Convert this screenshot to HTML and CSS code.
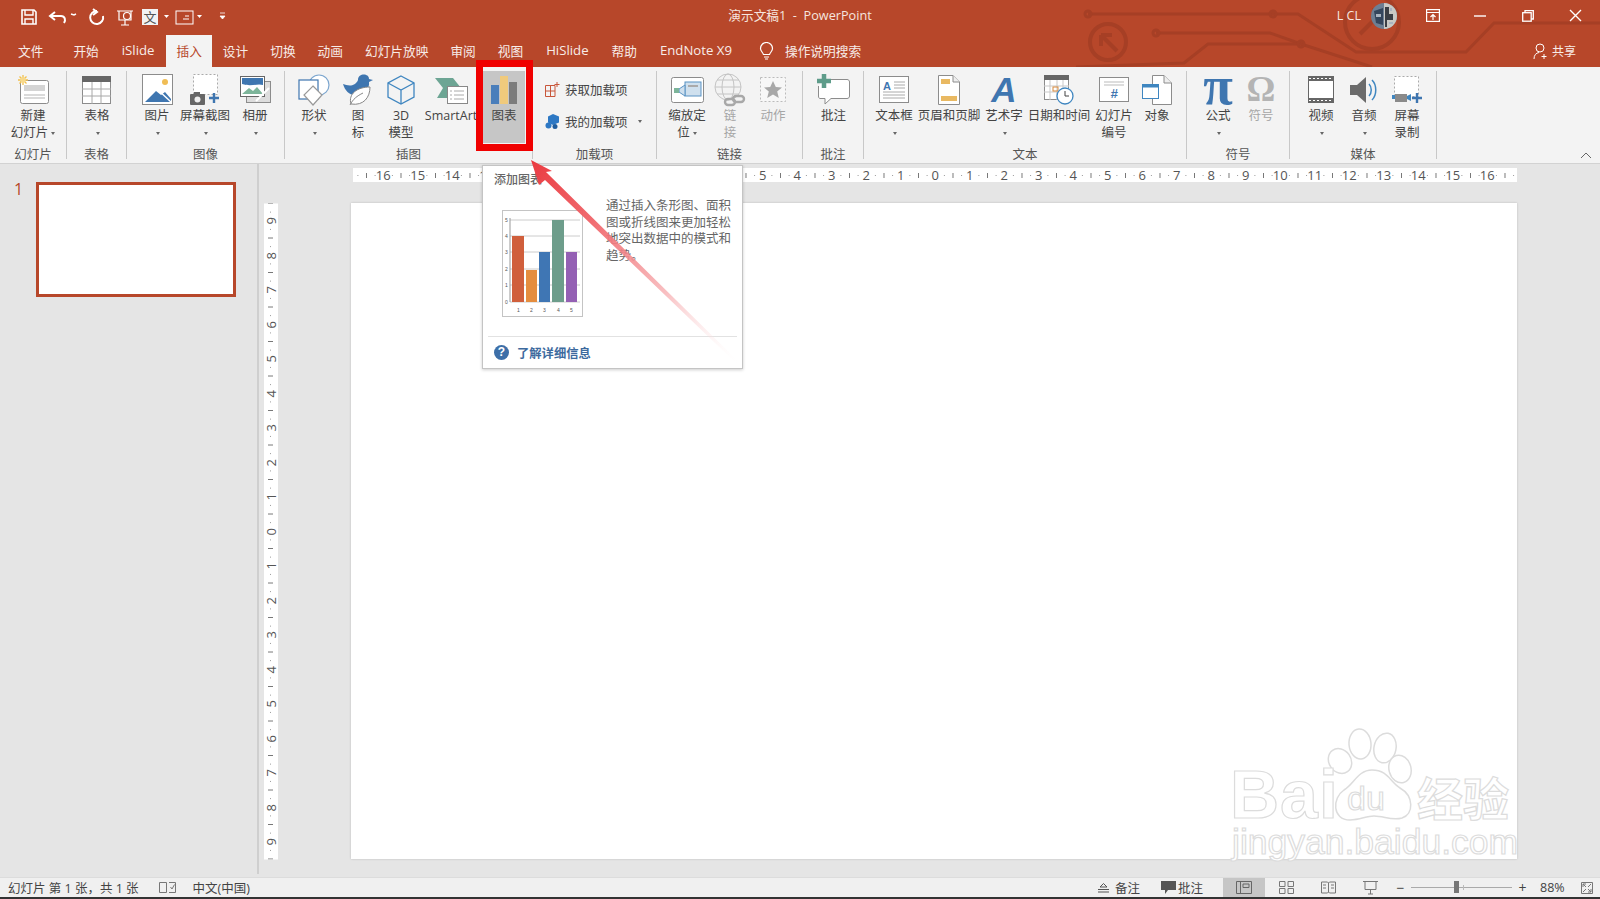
FILE: index.html
```html
<!DOCTYPE html>
<html>
<head>
  <title>演示文稿1 - PowerPoint</title>
  <meta name="viewport" content="width=device-width, initial-scale=1">
  <link rel="stylesheet" href="styles.css">
</head>
<body>
<div class="app">

  <header class="top">
    <svg class="circuit" width="600" height="67" viewBox="1000 0 600 67" fill="none" stroke="#a63f25" stroke-width="3">
      <path d="M1088 14H1298L1356 52H1466L1494 23H1600"/>
      <path d="M1156 33H1270L1301 44L1372 67"/>
      <path d="M1076 67L1184 63L1208 44H1300"/>
      <circle cx="1088" cy="14" r="3"/><circle cx="1273" cy="14" r="3"/><circle cx="1156" cy="33" r="3"/><circle cx="1301" cy="44" r="3"/>
      <circle cx="1108" cy="42" r="18" stroke-width="4"/>
      <path d="M1101 35H1112M1101 35V46M1101 35L1117 51" stroke-width="4"/>
      <circle cx="1372" cy="22" r="27" stroke-width="4"/>
      <path d="M1360 34L1384 10M1372 10H1385V23" stroke-width="4"/>
    </svg>

    <div class="titlebar">
      <svg class="qat" width="220" height="20" viewBox="0 0 220 20" fill="none" stroke="#fff" stroke-width="1.6">
        <path d="M2 3H14L16 5V17H2Z"/><path d="M5 3V8H13V3M5 17V12H13V17" stroke-width="1.4"/>
        <path d="M35 5L30 9L35 13M30 9H41C45 9 46 13 44 16" stroke-width="2"/>
        <path d="M51 7L54 8L56 7" stroke-width="1.4"/>
        <path d="M77 4A6.5 6.5 0 1 0 83 9M73 2L77 5L73 8" stroke-width="2"/>
        <path d="M97 4H113M99 4V13H111V4M105 13V18M101 18H109" stroke-width="1.2"/><circle cx="107" cy="9" r="3.5" stroke-width="1.2"/>
        <rect x="122" y="2" width="16" height="16" fill="#f2f2f2" stroke="none"/>
        <text x="123.500" y="15" class="qat-wen">文</text>
        <path d="M144 8H149L146.500 11Z" fill="#fff" stroke="none"/>
        <rect x="156" y="4" width="17" height="13" stroke-width="1"/><path d="M163 12H169M165 9H169" stroke-width="1"/>
        <path d="M177 8H182L179.500 11Z" fill="#fff" stroke="none"/>
        <path d="M200 6H205M200 9H205L202.500 12Z" fill="#fff" stroke-width=".8"/>
      </svg>
      <div class="doc-title">演示文稿1 &nbsp;-&nbsp; PowerPoint</div>
      <div class="win-controls">
        <span class="user-name">L CL</span>
        <svg class="avatar" width="26" height="26" viewBox="0 0 26 26">
          <circle cx="13" cy="13" r="13" fill="#6d7f93"/>
          <path d="M13 0A13 13 0 0 1 13 26Z" fill="#c9c9c4"/>
          <path d="M3 8L12 5V22L5 20Z" fill="#34465c"/>
          <path d="M14 4H18V11H22V17H16V24H14Z" fill="#3a3f45"/>
          <path d="M5 11H10V14H5ZM19 5H21V8H19ZM18 19H22V21H18Z" fill="#a9b4c0"/>
        </svg>
        <svg class="win-icon ribbon-mode" width="14" height="13" viewBox="0 0 14 13" fill="none" stroke="#fff" stroke-width="1.2"><rect x=".6" y=".6" width="12.800" height="11.800"/><path d="M.6 3.500H13.400M7 11V6M4.500 8L7 5.500L9.500 8"/></svg>
        <svg class="win-icon minimize" width="12" height="12" viewBox="0 0 12 12" stroke="#fff" stroke-width="1.4"><path d="M0 6H12"/></svg>
        <svg class="win-icon restore" width="12" height="12" viewBox="0 0 12 12" fill="none" stroke="#fff" stroke-width="1.3"><rect x=".7" y="2.700" width="8.500" height="8.500"/><path d="M3 2.700V.7H11.300V9H9.200"/></svg>
        <svg class="win-icon close" width="13" height="13" viewBox="0 0 13 13" stroke="#fff" stroke-width="1.4"><path d="M1 1L12 12M12 1L1 12"/></svg>
      </div>
    </div>

    <nav class="tabs">
      <a class="tab tab-file">文件</a>
      <a class="tab">开始</a>
      <a class="tab tab-latin">iSlide</a>
      <a class="tab active">插入</a>
      <a class="tab">设计</a>
      <a class="tab">切换</a>
      <a class="tab">动画</a>
      <a class="tab">幻灯片放映</a>
      <a class="tab">审阅</a>
      <a class="tab">视图</a>
      <a class="tab tab-latin">HiSlide</a>
      <a class="tab">帮助</a>
      <a class="tab tab-latin">EndNote X9</a>
      <span class="tell-me">
        <svg width="15" height="18" viewBox="0 0 15 18" fill="none" stroke="#fff" stroke-width="1.2"><path d="M4.500 12.500C3.500 10 1.500 9 1.500 6.500A6 6 0 0 1 13.500 6.500C13.500 9 11.500 10 10.500 12.500ZM5 15H10M6 17H9"/></svg>
        操作说明搜索
      </span>
      <span class="share">
        <svg width="16" height="17" viewBox="0 0 16 17" fill="none" stroke="#fff" stroke-width="1"><circle cx="7" cy="5" r="4"/><path d="M1 16C1 12 3 10 6 9.500M11 11V16M8.500 13.500H13.500"/></svg>
        共享
      </span>
    </nav>
  </header>

  <section class="ribbon">
    <div class="group g-slide">
      <div class="group-items">
        <div class="btn w-66">
          <div class="ico-box"><svg width="32" height="32" viewBox="0 0 32 32"><rect x="3.500" y="6.500" width="28" height="23" rx="2" fill="#fff" stroke="#8c8c8c"/><rect x="7" y="11" width="21" height="6" fill="#d4d4d4"/><path d="M7 21H28M7 24H28" stroke="#b5b5b5"/><g stroke="#f2c04d" stroke-width="1.300"><path d="M6 1V11M1 6H11M2.500 2.500L9.500 9.500M9.500 2.500L2.500 9.500"/></g><circle cx="6" cy="6" r="2.800" fill="#f7d98a"/></svg></div>
          <span>新建<br>幻灯片<i class="caret"></i></span>
        </div>
      </div>
      <div class="group-label">幻灯片</div>
    </div>

    <div class="group g-table">
      <div class="group-items">
        <div class="btn w-60">
          <div class="ico-box"><svg width="30" height="28" viewBox="0 0 30 28"><rect x=".5" y=".5" width="28" height="27" fill="#fff" stroke="#8c8c8c"/><rect width="29" height="6" fill="#666"/><path d="M0 13H29M0 20H29M10 6V28M19 6V28" stroke="#a8a8a8"/></svg></div>
          <span>表格<br><i class="caret"></i></span>
        </div>
      </div>
      <div class="group-label">表格</div>
    </div>

    <div class="group g-image">
      <div class="group-items">
        <div class="btn w-40">
          <div class="ico-box"><svg width="31" height="31" viewBox="0 0 31 31"><rect x=".5" y=".5" width="30" height="30" fill="#fff" stroke="#8c8c8c"/><circle cx="23" cy="8" r="3" fill="#f0bd55"/><path d="M3 28L14 17L19 21L23 18L29 25V28Z" fill="#3f76b0"/><path d="M15 15L29 28" stroke="#fff" stroke-width="1.500"/></svg></div>
          <span>图片<br><i class="caret"></i></span>
        </div>
        <div class="btn w-56">
          <div class="ico-box"><svg width="30" height="31" viewBox="0 0 30 31"><rect x="3.500" y=".5" width="24" height="20" fill="#fff" stroke="#aaa" stroke-dasharray="2 2"/><rect x="0" y="20" width="15" height="11" rx="1" fill="#666"/><rect x="4" y="18" width="6" height="3" fill="#666"/><circle cx="7.500" cy="25.500" r="3" fill="#eee"/><path d="M24 19V29M19 24H29" stroke="#3f76b0" stroke-width="2.400"/></svg></div>
          <span>屏幕截图<br><i class="caret"></i></span>
        </div>
        <div class="btn w-44">
          <div class="ico-box"><svg width="31" height="28" viewBox="0 0 31 28"><rect x="6.500" y="5.500" width="24" height="21" fill="#ddd" stroke="#8c8c8c"/><rect x=".5" y=".5" width="24" height="20" fill="#fff" stroke="#666"/><path d="M2 2H23V9C17 7 12 11 2 8Z" fill="#3f76b0"/><path d="M2 18L9 12L13 15L17 11L23 18Z" fill="#7db59a"/><path d="M16 25L29 12" stroke="#fff" stroke-width="2"/></svg></div>
          <span>相册<br><i class="caret"></i></span>
        </div>
      </div>
      <div class="group-label">图像</div>
    </div>

    <div class="group g-illus">
      <div class="group-items">
        <div class="btn w-44">
          <div class="ico-box"><svg width="32" height="32" viewBox="0 0 32 32" fill="#fff" stroke="#7ca6cf" stroke-width="1.200"><circle cx="21" cy="11" r="10"/><rect x="1" y="6" width="19" height="19" stroke="#3f76b0"/><path d="M15 12L24 21L15 31L6 21Z" stroke="#999"/></svg></div>
          <span>形状<br><i class="caret"></i></span>
        </div>
        <div class="btn w-44">
          <div class="ico-box"><svg width="32" height="33" viewBox="0 0 32 33"><path d="M16 7C16 0 27 0 27 6L31 7L27 9C28 16 22 21 15 22C8 23 3 18 1 11C6 13 13 14 16 7Z" fill="#3f76b0"/><path d="M9 31C6 21 15 14 28 14C28 24 22 33 9 31Z" fill="#fff" stroke="#888"/><path d="M8 32C11 26 15 23 21 20" fill="none" stroke="#888"/></svg></div>
          <span>图<br>标</span>
        </div>
        <div class="btn w-42">
          <div class="ico-box"><svg width="28" height="30" viewBox="0 0 28 30" fill="none" stroke="#3f86c0" stroke-width="1.300"><path d="M14 1L27 8V22L14 29L1 22V8Z"/><path d="M1 8L14 15L27 8M14 15V29"/></svg></div>
          <span>3D<br>模型</span>
        </div>
        <div class="btn w-58">
          <div class="ico-box"><svg width="33" height="28" viewBox="0 0 33 28"><path d="M0 2H18L26 12H18L12 22H2L8 12Z" fill="#5e9c8a" opacity=".9"/><rect x="12.500" y="10.500" width="20" height="17" fill="#fff" stroke="#888"/><path d="M19 15H29M19 19H29M19 23H29M15 15H17M15 19H17M15 23H17" stroke="#aaa"/></svg></div>
          <span class="no-wrap">SmartArt</span>
        </div>
        <div class="btn w-42 selected">
          <div class="ico-box"><svg width="26" height="28" viewBox="0 0 26 28"><rect x="0" y="9" width="8" height="19" fill="#4a7ebb"/><rect x="9" y="0" width="8" height="28" fill="#f0ca7c"/><rect x="18" y="6" width="8" height="22" fill="#7c7c7c"/></svg></div>
          <span>图表</span>
        </div>
      </div>
      <div class="group-label">插图</div>
    </div>

    <div class="group g-addin">
      <div class="group-items addin-items">
        <div class="addin-row">
          <svg width="15" height="15" viewBox="0 0 15 15" fill="none" stroke="#c8563a"><path d="M.5 3.500H10V14.500H.5ZM.5 9H10M5.500 3.500V14.500"/><path d="M12 0V5M9.500 2.500H14.500"/></svg>
          <span>获取加载项</span>
        </div>
        <div class="addin-row">
          <svg width="15" height="15" viewBox="0 0 15 15" fill="#2d78c4"><path d="M8 0L14 2.500V8.500L8 11L3 8.500V2.500Z"/><circle cx="3.500" cy="11.500" r="3"/><circle cx="10" cy="12.500" r="2.500" fill="#1f5d9e"/></svg>
          <span>我的加载项</span>
          <i class="caret addin-caret"></i>
        </div>
      </div>
      <div class="group-label">加载项</div>
    </div>

    <div class="group g-links">
      <div class="group-items">
        <div class="btn w-44">
          <div class="ico-box"><svg width="33" height="26" viewBox="0 0 33 26"><rect x=".5" y=".5" width="32" height="25" rx="2" fill="#fff" stroke="#8c8c8c"/><rect x="14" y="5" width="16" height="14" fill="#cfe0ee" stroke="#5a93c4"/><path d="M17 9H27" stroke="#aaa" stroke-width="2"/><path d="M14 8L8 12V15L14 19Z" fill="#cfe0ee" stroke="#5a93c4"/><rect x="3" y="11" width="5" height="5" fill="#7db59a"/></svg></div>
          <span>缩放定<br>位<i class="caret"></i></span>
        </div>
        <div class="btn w-42 disabled">
          <div class="ico-box"><svg width="32" height="34" viewBox="0 0 32 34" fill="none" stroke="#c4c4c4"><circle cx="14" cy="14" r="13"/><ellipse cx="14" cy="14" rx="6" ry="13"/><path d="M1 14H27M3 7H25M3 21H25"/><g stroke="#a8a8a8" stroke-width="2.400"><rect x="11" y="26" width="10" height="6" rx="3"/><rect x="19" y="23" width="11" height="6" rx="3"/></g></svg></div>
          <span>链<br>接</span>
        </div>
        <div class="btn w-44 disabled">
          <div class="ico-box"><svg width="28" height="27" viewBox="0 0 28 27"><rect x="1.500" y="1.500" width="25" height="24" fill="#f7f7f7" stroke="#bbb" stroke-dasharray="2 2"/><path d="M14 5L16.800 11L23 11.500L18.200 15.500L19.800 22L14 18.500L8.200 22L9.800 15.500L5 11.500L11.200 11Z" fill="#a8a8a8"/></svg></div>
          <span>动作</span>
        </div>
      </div>
      <div class="group-label">链接</div>
    </div>

    <div class="group g-comment">
      <div class="group-items">
        <div class="btn w-61">
          <div class="ico-box"><svg width="33" height="32" viewBox="0 0 33 32"><path d="M6.500 5.500H30C31.500 5.500 32.500 6.500 32.500 8V22C32.500 23.500 31.500 24.500 30 24.500H14L8 30V24.500H3C2 24.500 1.500 23.500 1.500 22V12" fill="#fff" stroke="#8c8c8c"/><path d="M7 0V14M0 7H14" stroke="#5e9c8a" stroke-width="4.500"/></svg></div>
          <span>批注</span>
        </div>
      </div>
      <div class="group-label">批注</div>
    </div>

    <div class="group g-text">
      <div class="group-items">
        <div class="btn w-44">
          <div class="ico-box"><svg width="30" height="27" viewBox="0 0 30 27"><rect x=".5" y=".5" width="29" height="26" fill="#fff" stroke="#8c8c8c"/><text x="4" y="14" class="ico-letter">A</text><path d="M15 6H26M15 9H26M15 12H26M4 16H26M4 19H26M4 22H26" stroke="#aaa"/></svg></div>
          <span>文本框<br><i class="caret"></i></span>
        </div>
        <div class="btn w-66">
          <div class="ico-box"><svg width="22" height="30" viewBox="0 0 22 30"><path d="M.5.5H15L21.500 7V29.500H.5Z" fill="#fff" stroke="#8c8c8c"/><path d="M15 .5V7H21.500" fill="#eee" stroke="#8c8c8c"/><rect x="3" y="4" width="9" height="5" fill="#e9b962"/><rect x="3" y="21" width="16" height="5" fill="#e9b962"/></svg></div>
          <span>页眉和页脚</span>
        </div>
        <div class="btn w-44">
          <div class="ico-box ico-wordart">A</div>
          <span>艺术字<br><i class="caret"></i></span>
        </div>
        <div class="btn w-66">
          <div class="ico-box"><svg width="30" height="30" viewBox="0 0 30 30"><rect x=".5" y=".5" width="24" height="24" fill="#fff" stroke="#8c8c8c"/><rect width="25" height="5" fill="#666"/><path d="M0 11H25M0 17H25M6 5V25M13 5V25M19 5V25" stroke="#c9c9c9"/><rect x="9" y="12" width="5" height="4" fill="none" stroke="#d78a3c"/><circle cx="21" cy="21" r="8" fill="#fff" stroke="#3f86c0" stroke-width="1.300"/><path d="M21 16V21H25" fill="none" stroke="#444"/></svg></div>
          <span>日期和时间</span>
        </div>
        <div class="btn w-44">
          <div class="ico-box"><svg width="30" height="25" viewBox="0 0 30 25"><rect x=".5" y=".5" width="29" height="24" fill="#fff" stroke="#8c8c8c"/><path d="M5 5H25M5 8H25" stroke="#bbb"/><text x="15" y="21" class="ico-hash">#</text></svg></div>
          <span>幻灯片<br>编号</span>
        </div>
        <div class="btn w-42">
          <div class="ico-box"><svg width="30" height="30" viewBox="0 0 30 30"><path d="M10.500.5H22L29.500 8V29.500H10.500Z" fill="#fff" stroke="#8c8c8c"/><path d="M22 .5V8H29.500" fill="#eee" stroke="#8c8c8c"/><rect x=".5" y="9.500" width="16" height="14" fill="#fff" stroke="#3f86c0"/><rect x=".5" y="9.500" width="16" height="3" fill="#3f86c0"/></svg></div>
          <span>对象</span>
        </div>
      </div>
      <div class="group-label">文本</div>
    </div>

    <div class="group g-symbol">
      <div class="group-items">
        <div class="btn w-44">
          <div class="ico-box ico-math ico-pi">π</div>
          <span>公式<br><i class="caret"></i></span>
        </div>
        <div class="btn w-42 disabled">
          <div class="ico-box ico-math ico-omega">Ω</div>
          <span>符号</span>
        </div>
      </div>
      <div class="group-label">符号</div>
    </div>

    <div class="group g-media">
      <div class="group-items">
        <div class="btn w-44">
          <div class="ico-box"><svg width="26" height="27" viewBox="0 0 26 27"><rect x=".5" y=".5" width="25" height="26" fill="#fff" stroke="#666"/><rect width="26" height="5" fill="#666"/><rect y="22" width="26" height="5" fill="#666"/><path d="M1 2.500H25M1 24.500H25" stroke="#fff" stroke-dasharray="2 2"/></svg></div>
          <span>视频<br><i class="caret"></i></span>
        </div>
        <div class="btn w-42">
          <div class="ico-box"><svg width="28" height="28" viewBox="0 0 28 28" fill="none"><path d="M0 9H7L16 1V27L7 19H0Z" fill="#6b6b6b"/><path d="M19 8C22 11 22 17 19 20M22 4C27 9 27 19 22 24" stroke="#3f86c0" stroke-width="1.500"/></svg></div>
          <span>音频<br><i class="caret"></i></span>
        </div>
        <div class="btn w-44">
          <div class="ico-box"><svg width="30" height="28" viewBox="0 0 30 28"><rect x="2.500" y=".5" width="24" height="20" fill="#fff" stroke="#aaa" stroke-dasharray="2 2"/><rect x="3" y="18" width="12" height="8" fill="#8a8a8a"/><path d="M0 19H3V23H0ZM15 20L19 18V25L15 23Z" fill="#3f86c0"/><path d="M25 17V27M20 22H30" stroke="#3f76b0" stroke-width="2.400"/></svg></div>
          <span>屏幕<br>录制</span>
        </div>
      </div>
      <div class="group-label">媒体</div>
    </div>

    <svg class="collapse" width="12" height="7" viewBox="0 0 12 7" fill="none" stroke="#666"><path d="M1 6L6 1L11 6"/></svg>
  </section>

  <main class="workspace">
    <aside class="thumbs">
      <span class="thumb-num">1</span>
      <div class="thumb"></div>
    </aside>
    <div class="editor">
      <div class="ruler-h">
        <span>16</span><span>15</span><span>14</span><span>13</span><span>12</span><span>11</span><span>10</span><span>9</span><span>8</span><span>7</span><span>6</span><span>5</span><span>4</span><span>3</span><span>2</span><span>1</span><span>0</span><span>1</span><span>2</span><span>3</span><span>4</span><span>5</span><span>6</span><span>7</span><span>8</span><span>9</span><span>10</span><span>11</span><span>12</span><span>13</span><span>14</span><span>15</span><span>16</span>
      </div>
      <div class="ruler-v">
        <span>9</span><span>8</span><span>7</span><span>6</span><span>5</span><span>4</span><span>3</span><span>2</span><span>1</span><span>0</span><span>1</span><span>2</span><span>3</span><span>4</span><span>5</span><span>6</span><span>7</span><span>8</span><span>9</span>
      </div>
      <div class="slide"></div>
    </div>
  </main>

  <footer class="status">
    <div class="status-left">
      <span>幻灯片 第 1 张，共 1 张</span>
      <svg class="notes-check" width="17" height="13" viewBox="0 0 17 13" fill="none" stroke="#777"><path d="M.5 1.500H7.500V11.500H.5ZM10 1.500H16.500V11.500H10M11.500 6L13 8L15.500 3.500"/></svg>
      <span>中文(中国)</span>
    </div>
    <div class="status-right">
      <span class="st-item st-notes">
        <svg width="11" height="11" viewBox="0 0 11 11" fill="none" stroke="#555"><path d="M2 5H9L5.500 1.500ZM0 7.500H11M0 10H11"/></svg>
        备注
      </span>
      <span class="st-item st-comments">
        <svg width="15" height="13" viewBox="0 0 15 13" fill="#555"><path d="M0 0H15V9H7L4 13V9H0Z"/></svg>
        批注
      </span>
      <span class="view view-on"><svg width="16" height="13" viewBox="0 0 16 13" fill="none" stroke="#666"><path d="M.5.5H15.500V12.500H.5ZM4.500.5V12.500M7 3H13V6.500H7Z"/></svg></span>
      <span class="view"><svg width="15" height="13" viewBox="0 0 15 13" fill="none" stroke="#777"><path d="M.5.5H6V5.500H.5ZM9 .5H14.500V5.500H9ZM.5 7.500H6V12.500H.5ZM9 7.500H14.500V12.500H9Z"/></svg></span>
      <span class="view"><svg width="15" height="13" viewBox="0 0 15 13" fill="none" stroke="#777"><path d="M.5 1H6.500L7.500 2L8.500 1H14.500V12H8.500L7.500 11L6.500 12H.5ZM7.500 2V11M2 4H5M2 7H5M10 4H13M10 7H13"/></svg></span>
      <span class="view"><svg width="15" height="14" viewBox="0 0 15 14" fill="none" stroke="#777"><path d="M0 .5H15M2 .5V8.500H13V.5M7.500 8.500V13M5 13H10"/></svg></span>
      <div class="zoom-ctl">
        <span class="zoom-sign">−</span>
        <div class="zoom-track"><i class="zoom-thumb"></i><i class="zoom-tick"></i></div>
        <span class="zoom-sign">+</span>
      </div>
      <span class="zoom-pct">88%</span>
      <svg class="fit" width="12" height="12" viewBox="0 0 12 12" fill="none" stroke="#777"><path d="M.5.5H11.500V11.500H.5Z"/><path d="M2 2L5 5M2 5V2H5M10 10L7 7M10 7V10H7M10 2L7 5M2 10L5 7" /></svg>
    </div>
  </footer>

  <!-- things lying over the window -->
  <div class="tooltip">
    <div class="tip-title">添加图表</div>
    <div class="tip-body">
      <svg class="tip-chart" width="81" height="107" viewBox="0 0 81 107">
        <rect x=".5" y=".5" width="80" height="106" fill="#fff" stroke="#c4c4c4"/>
        <path d="M8 10H78M8 26H78M8 42H78M8 59H78M8 75H78M8 92H78" stroke="#ccc"/>
        <path d="M8 8V92" stroke="#999"/>
        <rect x="10" y="26" width="12" height="66" fill="#d05f3c"/>
        <rect x="24" y="60" width="11" height="32" fill="#e58d3f"/>
        <rect x="37" y="42" width="11" height="50" fill="#3f76b4"/>
        <rect x="50" y="10" width="12" height="82" fill="#6d9d8b"/>
        <rect x="64" y="42" width="11" height="50" fill="#9460b4"/>
        <g class="tip-chart-nums">
          <text x="3" y="12">5</text><text x="3" y="28">4</text><text x="3" y="44">3</text><text x="3" y="61">2</text><text x="3" y="77">1</text><text x="3" y="94">0</text>
          <text x="15" y="102">1</text><text x="28" y="102">2</text><text x="41" y="102">3</text><text x="55" y="102">4</text><text x="68" y="102">5</text>
        </g>
      </svg>
      <p class="tip-text">通过插入条形图、面积图或折线图来更加轻松地突出数据中的模式和趋势。</p>
    </div>
    <div class="tip-link">
      <span class="tip-q">?</span>
      <span>了解详细信息</span>
    </div>
  </div>

  <div class="red-box"></div>

  <svg class="arrow" width="1600" height="899" viewBox="0 0 1600 899">
    <defs>
      <linearGradient id="arrow-fade" gradientUnits="userSpaceOnUse" x1="531" y1="160" x2="741" y2="364">
        <stop offset="0" stop-color="#ea3a40"/>
        <stop offset=".3" stop-color="#f0656a" stop-opacity=".95"/>
        <stop offset=".65" stop-color="#f7b0b3" stop-opacity=".8"/>
        <stop offset="1" stop-color="#fff" stop-opacity="0"/>
      </linearGradient>
    </defs>
    <path d="M531 160L552 171L546 172L742 365L739 366L545 180L539 185Z" fill="url(#arrow-fade)"/>
  </svg>

  <svg class="watermark" width="310" height="160" viewBox="0 0 310 160">
    <g fill="#fff" stroke="#dcdcdc" stroke-width="1.500">
      <ellipse cx="136" cy="34" rx="11" ry="15" transform="rotate(-5 136 34)"/>
      <ellipse cx="161" cy="38" rx="11" ry="15" transform="rotate(12 161 38)"/>
      <ellipse cx="116" cy="51" rx="11" ry="13" transform="rotate(-35 116 51)"/>
      <ellipse cx="176" cy="59" rx="11" ry="14" transform="rotate(-15 176 59)"/>
      <path d="M148 60C134 60 130 74 120 80C108 88 108 110 126 110C136 110 142 106 150 106C160 106 168 111 178 108C190 104 190 86 176 78C166 72 164 60 148 60Z"/>
    </g>
    <g class="wm-text">
      <text x="6" y="108" class="wm-bai">Bai</text>
      <text x="123" y="100" class="wm-du">du</text>
      <text x="193" y="106" class="wm-jy">经验</text>
      <text x="8" y="144" class="wm-url">jingyan.baidu.com</text>
    </g>
  </svg>

</div>
</body>
</html>
```

FILE: styles.css
```css
* {
  box-sizing: border-box;
}
body {
  margin: 0;
  font-family: "Open Sans", "Noto Sans CJK SC", sans-serif;
  font-size: 12.5px;
  color: #444;
  background-color: #e5e5e5;
}
.app {
  position: relative;
  width: 1600px;
  height: 899px;
  overflow: hidden;
  display: flex;
  flex-direction: column;
}

/* title bar and tabs */
.top {
  position: relative;
  height: 67px;
  background-color: #b7472a;
  color: #fff;
  flex: none;
}
.circuit {
  position: absolute;
  top: 0;
  right: 0;
}
.titlebar {
  position: relative;
  height: 35px;
  display: grid;
  grid-template-columns: 1fr auto 1fr;
  align-items: center;
}
.qat {
  margin-left: 20px;
  margin-top: -1px;
}
.qat-wen {
  font-size: 13px;
  fill: #555;
  stroke: none;
}
.doc-title {
  color: #f6e5df;
  font-size: 12.7px;
  margin-top: -7px;
  white-space: nowrap;
}
.win-controls {
  display: flex;
  align-items: center;
  justify-content: flex-end;
  margin-top: -4px;
}
.user-name {
  margin-right: 10px;
  color: #f6e5df;
}
.avatar {
  margin-right: 29px;
}
.ribbon-mode {
  margin-right: 34px;
}
.minimize {
  margin-right: 36px;
}
.restore {
  margin-right: 35px;
}
.close {
  margin-right: 18px;
}
.tabs {
  position: relative;
  height: 32px;
  display: flex;
  align-items: stretch;
  padding-left: 7px;
  font-size: 12.7px;
}
.tab {
  display: flex;
  align-items: center;
  padding: 0 11px 2px;
  color: #f8ece8;
  white-space: nowrap;
}
.tab-file {
  margin-right: 8px;
}
.tab-latin {
  font-size: 13.2px;
  padding: 0 12px 2px;
}
.tab.active {
  padding: 0 10px 2px;
  background-color: #f3f3f3;
  color: #b7472a;
}
.tell-me {
  display: flex;
  align-items: center;
  gap: 11px;
  margin-left: 15px;
  padding-bottom: 1px;
  color: #f8ece8;
}
.share {
  display: flex;
  align-items: center;
  gap: 3px;
  margin-left: auto;
  margin-right: 24px;
  color: #f8ece8;
  font-size: 12px;
}

/* ribbon */
.ribbon {
  position: relative;
  flex: none;
  height: 97px;
  display: flex;
  padding-top: 4px;
  background-color: #f3f3f3;
  border-bottom: 1px solid #d2d2d2;
}
.group {
  height: 88px;
  display: flex;
  flex-direction: column;
  border-right: 1px solid #c8c8c8;
}
.group-items {
  flex: 1;
  display: flex;
  min-height: 0;
}
.group-label {
  height: 17px;
  line-height: 26px;
  text-align: center;
  color: #555;
}
.g-slide { width: 67px; }
.g-table { width: 60px; }
.g-image { width: 158px; }
.g-image .group-items { padding-left: 10px; }
.g-illus { width: 248px; }
.g-illus .group-items { padding-left: 7px; }
.g-addin { width: 124px; }
.g-links { width: 146px; }
.g-links .group-items { padding-left: 8px; }
.g-comment { width: 61px; }
.g-text { width: 323px; }
.g-text .group-items { padding-left: 8px; }
.g-symbol { width: 103px; }
.g-symbol .group-items { padding-left: 9px; }
.g-media { width: 147px; }
.g-media .group-items { padding-left: 9px; }

.btn {
  flex: none;
  display: flex;
  flex-direction: column;
  align-items: center;
  text-align: center;
  line-height: 16.5px;
  height: 72px;
}
.w-40 { width: 40px; }
.w-42 { width: 42px; }
.w-44 { width: 44px; }
.w-56 { width: 56px; }
.w-58 { width: 58px; }
.w-60 { width: 60px; }
.w-61 { width: 61px; }
.w-66 { width: 66px; }
.no-wrap {
  white-space: nowrap;
}
.btn.selected {
  margin-left: 3px;
  background-color: #c6c6c6;
}
.btn.disabled {
  color: #a6a6a6;
}
.ico-box {
  height: 37px;
  width: 100%;
  display: flex;
  align-items: center;
  justify-content: center;
  flex: none;
}
.ico-wordart {
  font-family: "Liberation Sans", sans-serif;
  font-size: 35px;
  font-style: italic;
  font-weight: bold;
  color: #3f76b0;
  line-height: 37px;
}
.ico-math {
  font-family: "Liberation Serif", serif;
  font-weight: bold;
  line-height: 37px;
}
.ico-pi {
  color: #3f76b0;
  font-size: 54px;
  padding-bottom: 6px;
}
.ico-omega {
  color: #b4b4b4;
  font-size: 36px;
}
.ico-letter {
  font-family: "Liberation Sans", sans-serif;
  font-size: 11px;
  font-weight: bold;
  fill: #3f76b0;
}
.ico-hash {
  font-family: "Liberation Sans", sans-serif;
  font-size: 13px;
  font-style: italic;
  font-weight: bold;
  fill: #3f76b0;
  text-anchor: middle;
}
.caret {
  display: inline-block;
  width: 0;
  height: 0;
  margin-left: 3px;
  vertical-align: middle;
  border-left: 2.5px solid transparent;
  border-right: 2.5px solid transparent;
  border-top: 3px solid #666;
}
.addin-items {
  flex-direction: column;
  padding: 10px 0 0 12px;
  gap: 16px;
}
.addin-row {
  display: flex;
  align-items: center;
  gap: 5px;
  height: 16px;
}
.addin-caret {
  margin-left: 5px;
}
.collapse {
  position: absolute;
  right: 8px;
  bottom: 4px;
}

/* thumbnails and slide */
.workspace {
  flex: none;
  height: 710px;
  display: flex;
  background-color: #e5e5e5;
}
.thumbs {
  width: 259px;
  flex: none;
  display: flex;
  align-items: flex-start;
  padding: 18px 0 0 14px;
  border-right: 2px solid #cfcfcf;
}
.thumb-num {
  width: 22px;
  font-size: 16px;
  line-height: 14px;
  color: #b7472a;
}
.thumb {
  width: 200px;
  height: 115px;
  background-color: #fff;
  border: 3px solid #b7472a;
}
.editor {
  flex: 1;
  display: grid;
  grid-template-columns: 14px 73px 1166px;
  grid-template-rows: 14px 20px 656px;
  padding: 4px 0 0 5px;
}
.ruler-h {
  grid-column: 3;
  grid-row: 1;
  margin-left: 2px;
  padding-left: 13px;
  display: flex;
  background-color: #fff;
  font-size: 13px;
  line-height: 14px;
  color: #555;
  background-image:
    linear-gradient(to right, #777 1px, transparent 1px),
    linear-gradient(to right, #999 1px, transparent 1px),
    linear-gradient(to right, #999 1px, transparent 1px);
  background-size: 34.5px 5px, 34.5px 1px, 34.5px 1px;
  background-position: 13px center, 4.4px center, 21.6px center;
  background-repeat: repeat-x;
}
.ruler-h span {
  flex: none;
  width: 34.5px;
  text-align: center;
}
.ruler-v {
  grid-column: 1;
  grid-row: 3;
  margin-top: 2px;
  height: 655.5px;
  writing-mode: vertical-rl;
  transform: rotate(180deg);
  display: flex;
  background-color: #fff;
  font-size: 13px;
  line-height: 14px;
  color: #555;
  background-image:
    linear-gradient(to bottom, #777 1px, transparent 1px),
    linear-gradient(to bottom, #999 1px, transparent 1px),
    linear-gradient(to bottom, #999 1px, transparent 1px);
  background-size: 5px 34.5px, 1px 34.5px, 1px 34.5px;
  background-position: center 0, center 8.6px, center 25.9px;
  background-repeat: repeat-y;
}
.ruler-v span {
  flex: none;
  height: 34.5px;
  text-align: center;
}
.slide {
  grid-column: 3;
  grid-row: 3;
  margin-top: 1px;
  height: 656px;
  background-color: #fff;
  box-shadow: 0 0 2px #bbb;
}

/* status bar */
.status {
  flex: none;
  margin-top: 3px;
  height: 22px;
  display: flex;
  justify-content: space-between;
  background-color: #f0f0f0;
  border-bottom: 2px solid #333;
  border-top: 1px solid #dcdcdc;
}
.status-left {
  display: flex;
  align-items: center;
  padding-left: 8px;
}
.notes-check {
  margin: 0 17px 0 20px;
}
.status-right {
  display: flex;
  align-items: center;
  height: 100%;
}
.st-item {
  display: flex;
  align-items: center;
}
.st-notes {
  gap: 6px;
  margin-right: 21px;
}
.st-comments {
  gap: 2px;
  margin-right: 20px;
}
.view {
  width: 42px;
  height: 100%;
  display: flex;
  align-items: center;
  justify-content: center;
}
.view-on {
  background-color: #c6c6c6;
}
.zoom-ctl {
  display: flex;
  align-items: center;
  gap: 6px;
  margin-left: 5px;
}
.zoom-sign {
  width: 9px;
  text-align: center;
  font-size: 14px;
  line-height: 14px;
}
.zoom-track {
  position: relative;
  width: 101px;
  height: 1px;
  background-color: #aaa;
}
.zoom-thumb {
  position: absolute;
  left: 43px;
  top: -6px;
  width: 5px;
  height: 12px;
  background-color: #777;
}
.zoom-tick {
  position: absolute;
  left: 52px;
  top: -2px;
  width: 1px;
  height: 5px;
  background-color: #bbb;
}
.zoom-pct {
  margin-left: 13px;
  width: 26px;
}
.fit {
  margin: 0 7px 0 15px;
}

/* overlays */
.tooltip {
  position: absolute;
  left: 482px;
  top: 165px;
  width: 261px;
  height: 204px;
  background-color: #fff;
  border: 1px solid #c4c4c4;
  box-shadow: 0 1px 3px rgba(0, 0, 0, 0.2);
  display: flex;
  flex-direction: column;
  color: #666;
}
.tip-title {
  padding: 5px 0 0 11px;
  line-height: 18px;
  font-size: 12px;
  font-weight: 500;
}
.tip-body {
  flex: 1;
  display: flex;
  align-items: flex-start;
  padding: 21px 0 0 19px;
}
.tip-chart {
  flex: none;
}
.tip-chart-nums {
  font-family: "Liberation Sans", sans-serif;
  font-size: 5px;
  fill: #555;
}
.tip-text {
  margin: -12px 0 0 23px;
  width: 127px;
  line-height: 16.5px;
  font-size: 12.5px;
}
.tip-link {
  height: 32px;
  margin: 0 5px;
  padding-left: 6px;
  display: flex;
  align-items: center;
  gap: 8px;
  border-top: 1px solid #e2e2e2;
  color: #3d6a9e;
  font-weight: 700;
  font-size: 12.3px;
}
.tip-q {
  width: 15px;
  height: 15px;
  border-radius: 50%;
  background-color: #3d6fa8;
  color: #fff;
  text-align: center;
  line-height: 15px;
  font-family: "Liberation Sans", sans-serif;
  font-size: 12px;
}
.red-box {
  position: absolute;
  left: 476px;
  top: 60px;
  width: 57px;
  height: 91px;
  border: 7px solid #f00000;
}
.arrow {
  position: absolute;
  left: 0;
  top: 0;
  pointer-events: none;
}
.watermark {
  position: absolute;
  left: 1224px;
  top: 710px;
}
.wm-text {
  fill: #fff;
  stroke: #dcdcdc;
  stroke-width: 1.2px;
  font-family: "Liberation Sans", sans-serif;
}
.wm-bai {
  font-size: 68px;
  font-weight: bold;
  letter-spacing: 1px;
}
.wm-du {
  font-size: 34px;
}
.wm-jy {
  font-family: "Noto Sans CJK SC", sans-serif;
  font-size: 46px;
  font-weight: bold;
}
.wm-url {
  font-size: 35.5px;
}
```
